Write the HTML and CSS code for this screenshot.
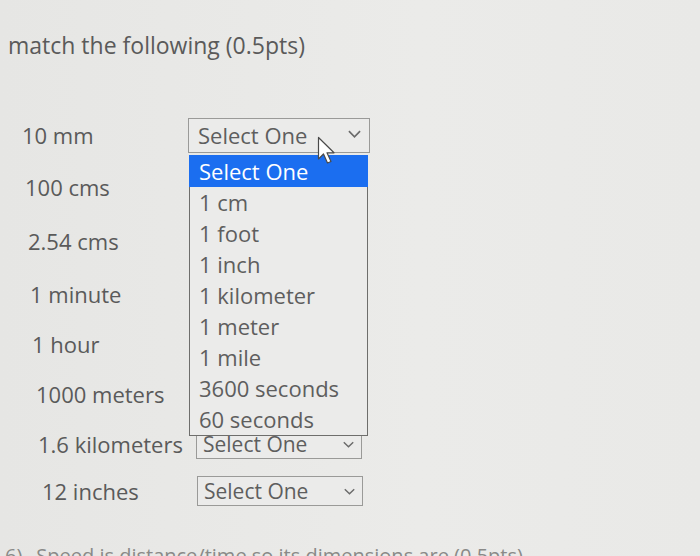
FILE: index.html
```html
<!DOCTYPE html>
<html>
<head>
<meta charset="utf-8">
<title>match the following</title>
<link rel="stylesheet" href="styles.css">
</head>
<body>
<div class="page">
  <h1 class="title">match the following (0.5pts)</h1>
  <div class="rows">
    <div class="row r1"><span class="label">10 mm</span><div class="select"><span class="sel-text">Select One</span><svg class="chev" viewBox="0 0 14 8"><polyline points="1,1 7,7 13,1"/></svg></div></div>
    <div class="row r2"><span class="label">100 cms</span><div class="select covered"><span class="sel-text">Select One</span></div></div>
    <div class="row r3"><span class="label">2.54 cms</span><div class="select covered"><span class="sel-text">Select One</span></div></div>
    <div class="row r4"><span class="label">1 minute</span><div class="select covered"><span class="sel-text">Select One</span></div></div>
    <div class="row r5"><span class="label">1 hour</span><div class="select covered"><span class="sel-text">Select One</span></div></div>
    <div class="row r6"><span class="label">1000 meters</span><div class="select covered"><span class="sel-text">Select One</span></div></div>
    <div class="row r7"><span class="label">1.6 kilometers</span><div class="select"><span class="sel-text">Select One</span><svg class="chev" viewBox="0 0 14 8"><polyline points="1,1 7,7 13,1"/></svg></div></div>
    <div class="row r8"><span class="label">12 inches</span><div class="select"><span class="sel-text">Select One</span><svg class="chev" viewBox="0 0 14 8"><polyline points="1,1 7,7 13,1"/></svg></div></div>

    <ul class="listbox">
      <li class="opt active">Select One</li>
      <li class="opt">1 cm</li>
      <li class="opt">1 foot</li>
      <li class="opt">1 inch</li>
      <li class="opt">1 kilometer</li>
      <li class="opt">1 meter</li>
      <li class="opt">1 mile</li>
      <li class="opt">3600 seconds</li>
      <li class="opt">60 seconds</li>
    </ul>
  </div>
  <div class="next"><span class="num">6)</span>Speed is distance/time so its dimensions are (0.5pts)</div>
  <svg class="cursor" viewBox="0 0 20 30"><path d="M1.5 1.5 L1.5 23 L6.5 18 L10.5 27 L14 25.5 L10 16.8 L17 16.8 Z"/></svg>
</div>
</body>
</html>
```

FILE: styles.css
```css
* { box-sizing: border-box; }

html, body {
  margin: 0;
  padding: 0;
  background: #e8e8e6;
}

.page {
  position: relative;
  width: 700px;
  height: 556px;
  overflow: hidden;
  font-family: "Open Sans", "Noto Sans", sans-serif;
  color: #5c5c5c;
  background: linear-gradient(90deg, #e6e6e4 0%, #ebebe9 60%, #e9e9e7 100%);
}

.title {
  margin: 30px 0 0 8px;
  font-size: 23px;
  line-height: 30px;
  font-weight: 400;
  color: #5a5a5a;
}

.rows {
  position: relative;
  margin-top: 50px;
  display: flex;
  flex-direction: column;
}

.row {
  display: flex;
  align-items: center;
}

.label {
  width: 188px;
  font-size: 22px;
  line-height: 28px;
  color: #5a5a5a;
  white-space: nowrap;
}

.select {
  position: relative;
  display: flex;
  align-items: center;
  width: 166px;
  height: 30px;
  padding-left: 6px;
  border: 1px solid #9a9a98;
  background: #ebebea;
  font-size: 21px;
  color: #5e5e5e;
}

.select.covered { visibility: hidden; }

.sel-text { line-height: 26px; }

.chev {
  position: absolute;
  right: 7px;
  top: 50%;
  width: 11px;
  height: 7px;
  margin-top: -3px;
  fill: none;
  stroke: #6a6a6a;
  stroke-width: 1.8;
}

.r1 { height: 50px; }
.r2 { height: 54px; }
.r3 { height: 54px; }
.r4 { height: 52px; }
.r5 { height: 48px; }
.r6 { height: 52px; }
.r7 { height: 48px; }
.r8 { height: 46px; }

.r1 .label { padding-left: 22px; }
.r2 .label { padding-left: 25px; }
.r3 .label { padding-left: 28px; }
.r4 .label { padding-left: 30px; }
.r5 .label { padding-left: 32px; }
.r6 .label { padding-left: 36px; }
.r7 .label { padding-left: 38px; }
.r8 .label { padding-left: 42px; }

.r1 .select {
  width: 182px;
  height: 35px;
  padding-left: 9px;
  font-size: 22px;
}
.r1 .chev { right: 8px; width: 13px; height: 8px; margin-top: -5px; }

.r2 .select { margin-left: 2px; }
.r3 .select { margin-left: 3px; }
.r4 .select { margin-left: 4px; }
.r5 .select { margin-left: 5px; }
.r6 .select { margin-left: 6px; }
.r7 .select { margin-left: 8px; }
.r8 .select { margin-left: 9px; }

.listbox {
  position: absolute;
  left: 189px;
  top: 45px;
  width: 179px;
  margin: 0;
  padding: 0;
  list-style: none;
  border: 1px solid #6e6e6c;
  border-top: none;
  background: #ebebea;
}

.opt {
  height: 31px;
  padding-left: 9px;
  font-size: 22px;
  line-height: 31px;
  color: #5e5e5e;
  white-space: nowrap;
}

.opt.active {
  height: 32px;
  line-height: 32px;
  background: #1b6ef0;
  color: #ffffff;
  margin: 0 -1px;
  padding-left: 10px;
}

.next {
  margin-top: 28px;
  padding-left: 5px;
  font-size: 20px;
  line-height: 28px;
  color: #8a8a88;
  white-space: nowrap;
}

.next .num { margin-right: 14px; }

.cursor {
  position: absolute;
  left: 317px;
  top: 136px;
  width: 20px;
  height: 30px;
  fill: #ffffff;
  stroke: #4a4a4a;
  stroke-width: 1.2;
  stroke-linejoin: round;
}
```
